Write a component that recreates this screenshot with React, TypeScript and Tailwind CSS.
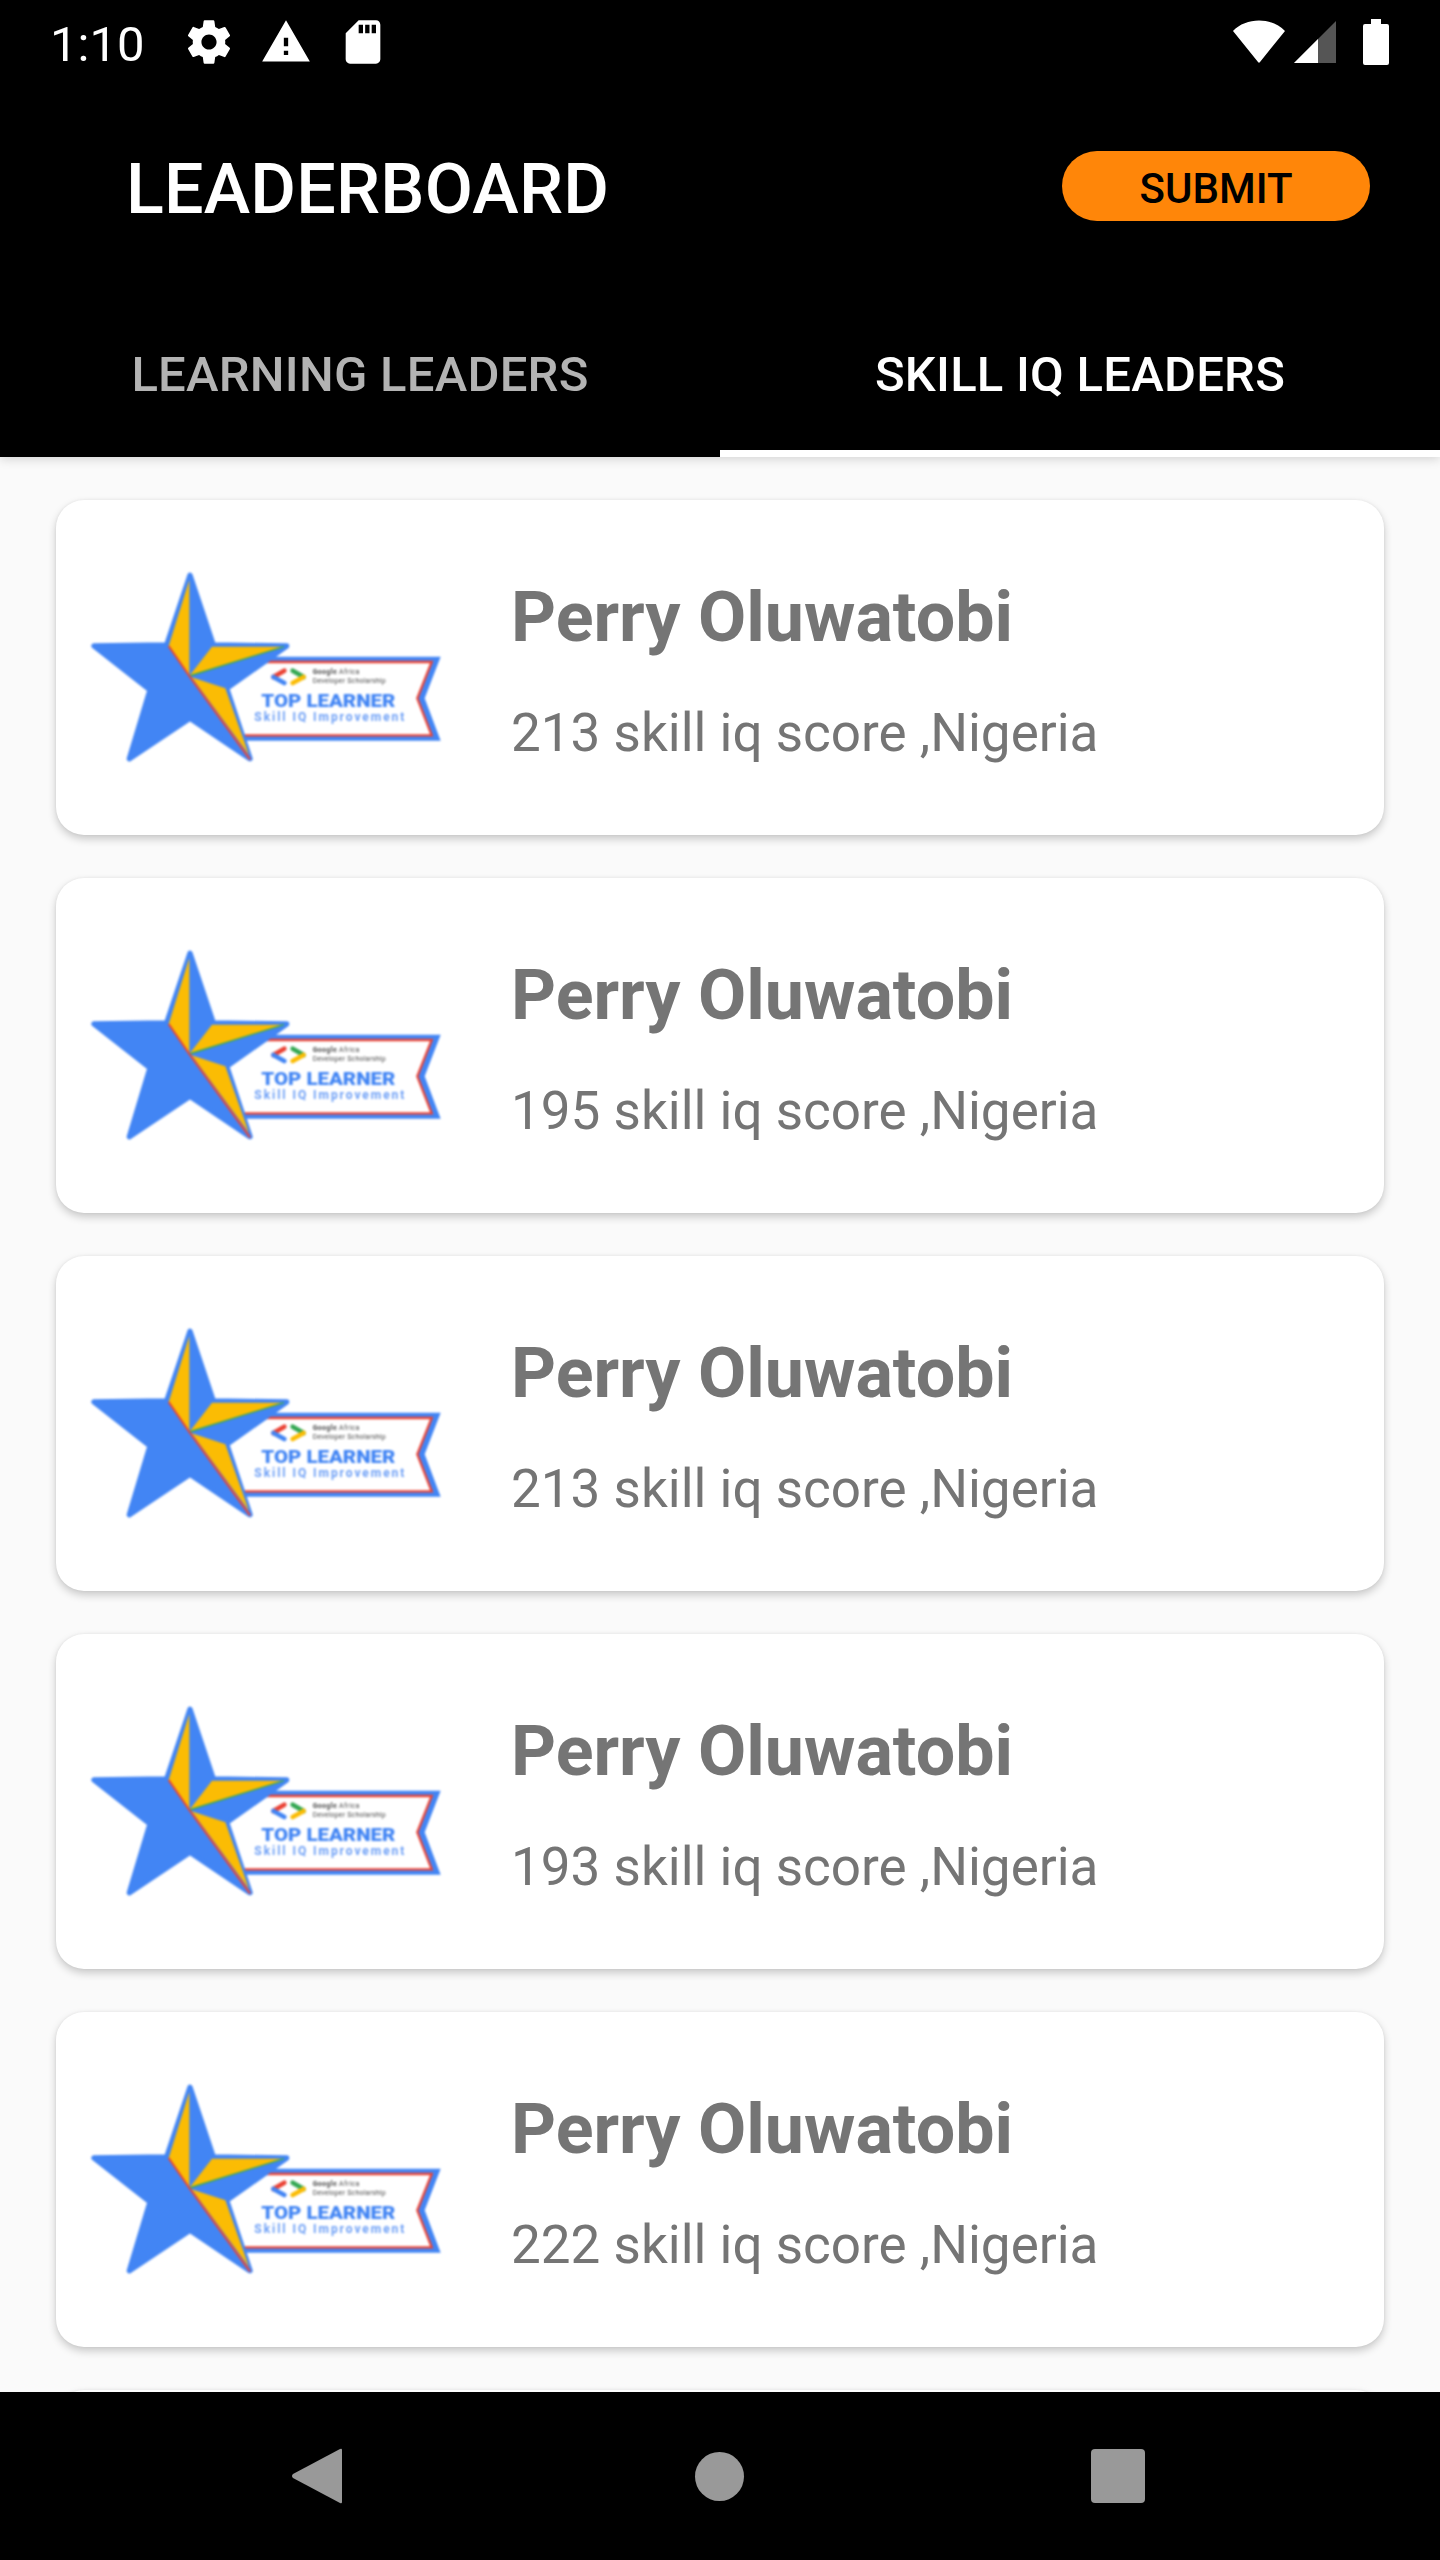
const scores = [213, 195, 213, 193, 222]

const cardClass = 'h-[335px] shrink-0 rounded-[28px] bg-white shadow-[0_4px_8px_rgba(0,0,0,0.2),0_0_3px_rgba(0,0,0,0.06)]'

function Badge() {
  return (
    <svg viewBox="0 0 1170 690" className="w-[390px] h-[230px] mb-[6px] shrink-0 blur-[1px]">
      {/* ribbon, runs on behind the star */}
      <polygon points="470,320 1112,320 1064,445 1112,572 470,572" fill="#4285f4" />
      <polygon points="470,336 1085,336 1042,445 1085,556 470,556" fill="#ffffff" stroke="#ea4335" strokeWidth="7" />
      {/* logo */}
      <path d="M643 362 L610 381" stroke="#ea4335" strokeWidth="14" strokeLinecap="round" />
      <path d="M610 381 L643 399" stroke="#4285f4" strokeWidth="14" strokeLinecap="round" />
      <path d="M668 362 L701 381" stroke="#34a853" strokeWidth="14" strokeLinecap="round" />
      <path d="M701 381 L668 399" stroke="#fbbc04" strokeWidth="14" strokeLinecap="round" />
      <text x="728" y="371" fontFamily="Roboto, sans-serif" fontSize="21" fill="#4a4a4a" textLength="140">
        <tspan fontWeight="700">Google</tspan> Africa
      </text>
      <text x="728" y="399" fontFamily="Roboto, sans-serif" fontSize="21" fill="#4a4a4a" textLength="219">Developer Scholarship</text>
      <text x="574" y="470" fontFamily="Roboto, sans-serif" fontSize="56" fontWeight="900" fill="#4285f4" textLength="402" lengthAdjust="spacingAndGlyphs">TOP LEARNER</text>
      <text x="553" y="513" fontFamily="Roboto, sans-serif" fontSize="36" fontWeight="700" fill="#6b9ef6" textLength="450">Skill IQ Improvement</text>
      {/* star */}
      <polygon
        points="360,76 430,285 650,288 470,415 540,626 360,505 178,626 240,420 72,288 290,285"
        fill="#4285f4"
        stroke="#4285f4"
        strokeWidth="16"
        strokeLinejoin="round"
      />
      <polygon points="358,90 296,288 358,378" fill="#fbbc04" />
      <polygon points="426,290 642,290 358,378" fill="#fbbc04" />
      <polygon points="365,382 466,415 537,614" fill="#fbbc04" />
      <path d="M642 290 L358 378" stroke="#34a853" strokeWidth="4" />
      <path d="M296 288 L358 378 L540 628" stroke="#ea4335" strokeWidth="6" fill="none" />
    </svg>
  )
}

function LeaderCard({ score }: { score: number }) {
  return (
    <div className={`${cardClass} flex items-center pl-[14px]`}>
      <Badge />
      <div className="ml-[51px] pt-[6px] flex flex-col">
        <div className="text-[70px] leading-[82px] font-bold text-[#757575]">Perry Oluwatobi</div>
        <div className="mt-[42px] text-[53px] leading-[66px] text-[#757575]">{score} skill iq score ,Nigeria</div>
      </div>
    </div>
  )
}

function StatusBar() {
  return (
    <div className="h-[84px] flex items-center text-white">
      <span className="ml-[50px] w-[133px] pt-[6px] text-[49px] leading-[84px]">1:10</span>
      <svg viewBox="0 0 24 24" className="w-[52px] h-[52px] fill-white">
        <path d="M19.43 12.98c.04-.32.07-.64.07-.98s-.03-.66-.07-.98l2.11-1.65c.19-.15.24-.42.12-.64l-2-3.46c-.12-.22-.39-.3-.61-.22l-2.49 1c-.52-.4-1.08-.73-1.69-.98l-.38-2.65C14.46 2.18 14.25 2 14 2h-4c-.25 0-.46.18-.49.42l-.38 2.65c-.61.25-1.17.59-1.69.98l-2.49-1c-.23-.09-.49 0-.61.22l-2 3.46c-.13.22-.07.49.12.64l2.11 1.65c-.04.32-.07.65-.07.98s.03.66.07.98l-2.11 1.65c-.19.15-.24.42-.12.64l2 3.46c.12.22.39.3.61.22l2.49-1c.52.4 1.08.73 1.69.98l.38 2.65c.03.24.24.42.49.42h4c.25 0 .46-.18.49-.42l.38-2.65c.61-.25 1.17-.59 1.69-.98l2.49 1c.23.09.49 0 .61-.22l2-3.46c.12-.22.07-.49-.12-.64l-2.11-1.65zM12 15.5c-1.93 0-3.5-1.57-3.5-3.5s1.57-3.5 3.5-3.5 3.5 1.57 3.5 3.5-1.57 3.5-3.5 3.5z" />
      </svg>
      <svg viewBox="0 0 24 24" className="ml-[25px] w-[52px] h-[52px] fill-white">
        <path d="M1 21h22L12 2 1 21zm12-3h-2v-2h2v2zm0-4h-2v-4h2v4z" />
      </svg>
      <svg viewBox="0 0 24 24" className="ml-[25px] w-[52px] h-[52px] fill-white">
        <path d="M18 2h-8L4.02 8 4 20c0 1.1.9 2 2 2h12c1.1 0 2-.9 2-2V4c0-1.1-.9-2-2-2zm-6 6h-2V4h2v4zm3 0h-2V4h2v4zm3 0h-2V4h2v4z" />
      </svg>
      <div className="flex-1" />
      {/* wifi */}
      <svg viewBox="0 0 54 44" className="w-[54px] h-[44px]">
        <path d="M1 11 C14 -3 40 -3 53 11 L28 42 Q27 43.5 26 42 Z" fill="#ffffff" strokeLinejoin="round" />
      </svg>
      {/* signal */}
      <svg viewBox="0 0 42 42" className="ml-[8px] w-[42px] h-[42px]">
        <polygon points="42,0 42,42 0,42" fill="#555555" />
        <polygon points="24,18 24,42 0,42" fill="#ffffff" />
      </svg>
      {/* battery */}
      <svg viewBox="0 0 26 46" className="ml-[27px] mr-[51px] w-[26px] h-[46px]">
        <path d="M8 0h10v5h6a2 2 0 0 1 2 2v37a2 2 0 0 1-2 2H2a2 2 0 0 1-2-2V7a2 2 0 0 1 2-2h6z" fill="#ffffff" />
      </svg>
    </div>
  )
}

function NavBar() {
  return (
    <div className="h-[168px] shrink-0 bg-black flex items-center pl-[292px] relative z-10">
      <svg viewBox="0 0 50 56" className="w-[50px] h-[56px]">
        <path d="M50 2 V54 Q50 56 48 55 L1 30 Q-1 28 1 26 L48 1 Q50 0 50 2 Z" fill="#999999" />
      </svg>
      <div className="ml-[353px] w-[49px] h-[49px] rounded-full bg-[#999999]" />
      <div className="ml-[347px] w-[54px] h-[54px] rounded-[4px] bg-[#999999]" />
    </div>
  )
}

export default function App() {
  return (
    <div className="w-[1440px] h-[2560px] flex flex-col bg-[#fafafa] overflow-hidden font-['Roboto',sans-serif]">
      <div className="h-[457px] shrink-0 bg-black flex flex-col relative z-10 shadow-[0_2px_10px_rgba(0,0,0,0.16)]">
        <StatusBar />
        <div className="h-[190px] flex items-start">
          <h1 className="mt-[64px] ml-[126px] text-[70px] leading-[82px] tracking-[0.2px] font-medium text-white">LEADERBOARD</h1>
          <div className="flex-1" />
          <button className="mt-[67px] mr-[70px] w-[308px] h-[70px] pt-[5px] rounded-full bg-[#ff8609] text-[42px] leading-[65px] font-medium text-black">
            SUBMIT
          </button>
        </div>
        <div className="flex-1 flex">
          <div className="flex-1 flex items-center justify-center pt-[25px] border-b-[7px] border-transparent text-[49px] tracking-[0.25px] font-medium text-[#b3b3b3]">LEARNING LEADERS</div>
          <div className="flex-1 flex items-center justify-center pt-[25px] border-b-[7px] border-white text-[49px] tracking-[0.25px] font-medium text-white">SKILL IQ LEADERS</div>
        </div>
      </div>
      <div className="flex-1 min-h-0 overflow-hidden flex flex-col gap-[43px] pt-[43px] px-[56px]">
        {scores.map((score, i) => (
          <LeaderCard key={i} score={score} />
        ))}
        <div className={cardClass} />
      </div>
      <NavBar />
    </div>
  )
}
